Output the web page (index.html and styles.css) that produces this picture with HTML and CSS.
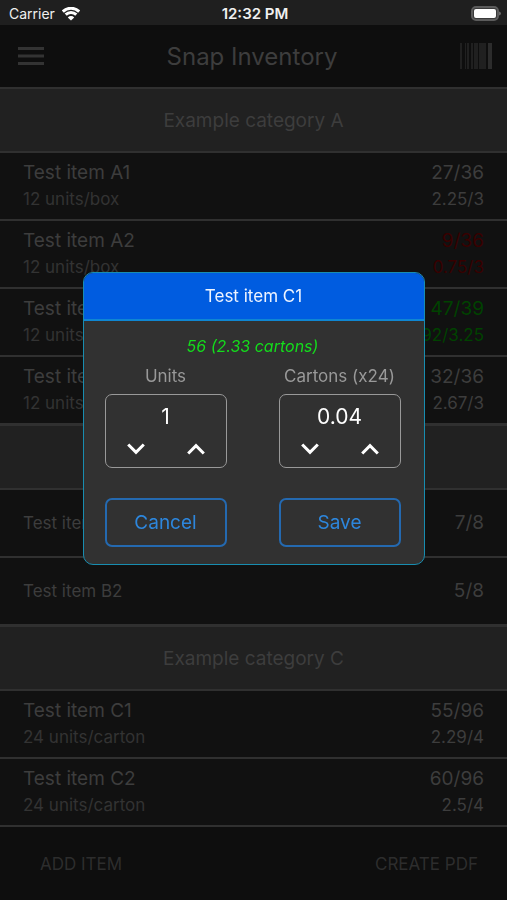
FILE: index.html
```html
<!DOCTYPE html>
<html lang="en">
<head>
<meta charset="utf-8">
<meta name="viewport" content="width=device-width, initial-scale=1">
<title>Snap Inventory</title>
<link rel="stylesheet" href="styles.css">
</head>
<body>
<div class="screen">
  <div class="status-bar">
    <div class="status-left">
      <span>Carrier</span>
      <svg class="wifi" viewBox="0 0 18 14" aria-hidden="true">
        <path d="M0.8 4.6a11.7 11.7 0 0 1 16.4 0" />
        <path d="M3.7 7.6a7.6 7.6 0 0 1 10.6 0" />
        <path class="solid" d="M9 13.6L5.8 10.4a4.6 4.6 0 0 1 6.4 0z" />
      </svg>
    </div>
    <span class="clock">12:32 PM</span>
    <svg class="battery" viewBox="0 0 30 15" aria-hidden="true">
      <rect class="shell" x="1" y="1" width="26" height="13" rx="4" />
      <rect class="charge" x="3" y="3" width="22" height="9" rx="2" />
      <path class="tip" d="M28 5.5q2 .6 2 2t-2 2z" />
    </svg>
  </div>

  <header class="app-bar">
    <button class="icon-button" type="button" aria-label="Menu">
      <svg class="menu-icon" viewBox="0 0 26 18" aria-hidden="true"><path d="M0 1.5h26M0 9h26M0 16.500h26" /></svg>
    </button>
    <h1>Snap Inventory</h1>
    <button class="icon-button" type="button" aria-label="Scan barcode">
      <svg class="barcode-icon" viewBox="0 0 33 26" aria-hidden="true"><path d="M0 0h2v26H0zM5 0h1v26H5zM7 0h2v26H7zM11 0h2v26h-2zM14 0h4v26h-4zM19 0h7v26h-7z" /><path class="bright" d="M28 0h4v26h-4z" /></svg>
    </button>
  </header>

  <main>
    <section>
      <h2>Example category A</h2>
      <ul>
        <li><div class="name">Test item A1<small>12 units/box</small></div><div class="count">27/36<small>2.25/3</small></div></li>
        <li><div class="name">Test item A2<small>12 units/box</small></div><div class="count low">9/36<small>0.75/3</small></div></li>
        <li><div class="name">Test item A3<small>12 units/box</small></div><div class="count full">47/39<small>3.92/3.25</small></div></li>
        <li><div class="name">Test item A4<small>12 units/box</small></div><div class="count">32/36<small>2.67/3</small></div></li>
      </ul>
    </section>
    <section>
      <h2>Example category B</h2>
      <ul>
        <li><div class="name single">Test item B1</div><div class="count">7/8</div></li>
        <li><div class="name single">Test item B2</div><div class="count">5/8</div></li>
      </ul>
    </section>
    <section>
      <h2>Example category C</h2>
      <ul>
        <li><div class="name">Test item C1<small>24 units/carton</small></div><div class="count">55/96<small>2.29/4</small></div></li>
        <li><div class="name">Test item C2<small>24 units/carton</small></div><div class="count">60/96<small>2.5/4</small></div></li>
      </ul>
    </section>
  </main>

  <footer class="actions">
    <button type="button">ADD ITEM</button>
    <button type="button">CREATE PDF</button>
  </footer>
</div>

<div class="overlay">
  <form class="dialog" role="dialog" aria-labelledby="dialog-title">
    <h2 id="dialog-title">Test item C1</h2>
    <div class="dialog-body">
      <p class="summary">56 (2.33 cartons)</p>
      <div class="columns">
        <div class="field">
          <label for="units">Units</label>
          <div class="stepper">
            <input id="units" type="text" inputmode="numeric" value="1">
            <button type="button" aria-label="Decrease units"><svg viewBox="0 0 18 12" aria-hidden="true"><path d="M1.200 1.500L9 9.300l7.800-7.800" /></svg></button>
            <button type="button" aria-label="Increase units"><svg viewBox="0 0 18 12" aria-hidden="true"><path d="M1.200 10.500L9 2.700l7.800 7.800" /></svg></button>
          </div>
        </div>
        <div class="field">
          <label for="cartons">Cartons (x24)</label>
          <div class="stepper">
            <input id="cartons" type="text" inputmode="decimal" value="0.04">
            <button type="button" aria-label="Decrease cartons"><svg viewBox="0 0 18 12" aria-hidden="true"><path d="M1.200 1.500L9 9.300l7.800-7.800" /></svg></button>
            <button type="button" aria-label="Increase cartons"><svg viewBox="0 0 18 12" aria-hidden="true"><path d="M1.200 10.500L9 2.700l7.800 7.800" /></svg></button>
          </div>
        </div>
      </div>
      <div class="columns dialog-actions">
        <button type="button">Cancel</button>
        <button type="submit">Save</button>
      </div>
    </div>
  </form>
</div>
</body>
</html>
```

FILE: styles.css
```css
* {
  box-sizing: border-box;
}

body {
  margin: 0;
  background: #0e0e0e;
  color: #3d3d3d;
  font-family: Inter, "Liberation Sans", sans-serif;
  font-size: 19px;
}

h1, h2, p, ul {
  margin: 0;
  padding: 0;
  font-weight: 400;
}

button, input {
  margin: 0;
  padding: 0;
  border: 0;
  background: none;
  color: inherit;
  font: inherit;
}

svg {
  display: block;
}

.screen {
  display: flex;
  flex-direction: column;
  min-height: 100vh;
}

/* Status bar */

.status-bar {
  display: grid;
  grid-template-columns: 1fr auto 1fr;
  align-items: center;
  height: 25px;
  padding: 2px 6px 0 9px;
  background: #1f1f1f;
  color: #f0f0f0;
  font-size: 14px;
}

.status-left {
  display: flex;
  align-items: center;
  gap: 7px;
}

.clock {
  font-size: 15px;
  font-weight: 600;
}

.wifi {
  width: 18px;
  height: 14px;
  fill: none;
  stroke: #fff;
  stroke-width: 3;
}

.wifi .solid {
  fill: #fff;
  stroke: none;
}

.battery {
  justify-self: end;
  width: 30px;
  height: 15px;
}

.battery .shell {
  fill: #3a3a3a;
  stroke: #5c5c5c;
  stroke-width: 2;
}

.battery .charge {
  fill: #fff;
}

.battery .tip {
  fill: #6c6c6c;
}

/* App bar */

.app-bar {
  display: flex;
  align-items: center;
  justify-content: space-between;
  height: 64px;
  padding: 0 14px 0 18px;
  border-bottom: 2px solid #303030;
}

.app-bar h1 {
  font-size: 24px;
}

.menu-icon {
  width: 26px;
  height: 18px;
  stroke: #333;
  stroke-width: 3;
}

.barcode-icon {
  width: 33px;
  height: 26px;
  fill: #202020;
}

.barcode-icon .bright {
  fill: #2c2c2c;
}

/* Inventory list */

main {
  background: #111;
}

main section + section {
  border-top: 1px solid #303030;
}

main h2 {
  display: flex;
  align-items: center;
  justify-content: center;
  height: 64px;
  border-bottom: 2px solid #303030;
  background: #212121;
  font-size: 19px;
}

main ul {
  list-style: none;
}

main li {
  display: flex;
  align-items: center;
  justify-content: space-between;
  min-height: 68px;
  padding: 7px 23px;
  border-bottom: 2px solid #303030;
  line-height: 26px;
}

main small {
  display: block;
  font-size: 17px;
}

.name small {
  color: #333;
}

.name.single {
  font-size: 17px;
}

.count {
  text-align: right;
}

.count.low {
  color: #380000;
}

.count.full {
  color: #004200;
}

/* Bottom actions */

.actions {
  display: flex;
  flex: 1;
  align-items: center;
  justify-content: space-between;
  padding: 0 29px 0 40px;
  color: #2d2d2d;
  font-size: 17px;
}

/* Dialog */

.overlay {
  position: fixed;
  inset: 0;
  display: flex;
  align-items: center;
  justify-content: center;
  padding: 0 16px 63px;
}

.dialog {
  width: 100%;
  max-width: 342px;
  overflow: hidden;
  border: 1px solid #188db0;
  border-radius: 10px;
  background: #313131;
}

.dialog h2 {
  border-bottom: 2px solid #0f86d2;
  background: #005ce0;
  color: #eef4ff;
  font-size: 17px;
  line-height: 46px;
  text-align: center;
}

.dialog-body {
  padding: 11px 23px 17px 21px;
}

.summary {
  color: #14dc1c;
  font-size: 16px;
  font-style: italic;
  line-height: 28px;
  text-align: center;
}

.columns {
  display: grid;
  grid-template-columns: 1fr 1fr;
  gap: 52px;
}

.field label {
  display: block;
  margin: 0 -16px 2px;
  color: #999;
  font-size: 17px;
  line-height: 32px;
  text-align: center;
}

.stepper {
  display: grid;
  grid-template-rows: 42px 1fr;
  grid-template-columns: 1fr 1fr;
  height: 74px;
  border: 1px solid #999;
  border-radius: 7px;
}

.stepper input {
  grid-column: 1 / -1;
  width: 100%;
  color: #fff;
  font-size: 21px;
  text-align: center;
}

.stepper button {
  display: flex;
  align-items: flex-start;
  justify-content: center;
  padding-top: 6px;
}

.stepper svg {
  width: 18px;
  height: 12px;
  fill: none;
  stroke: #fff;
  stroke-width: 3;
}

.dialog-actions {
  margin-top: 30px;
}

.dialog-actions button {
  height: 49px;
  border: 2px solid #2469b0;
  border-radius: 7px;
  color: #2d86dc;
  font-size: 19px;
}
```
